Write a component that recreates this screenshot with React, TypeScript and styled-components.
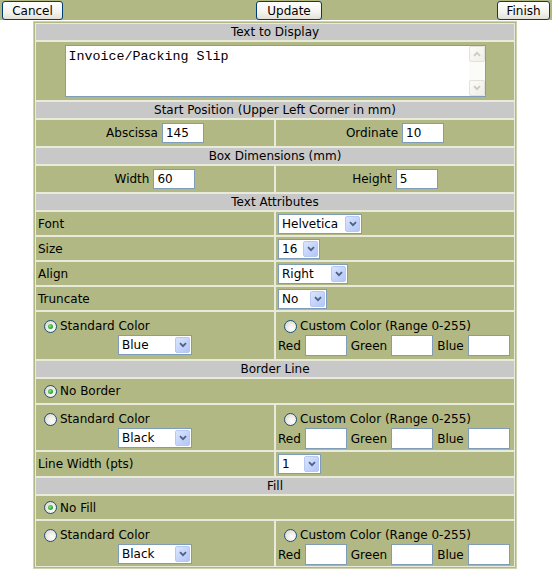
import { createGlobalStyle, styled } from "styled-components";

const OLIVE = "#b1b883";
const LIGHT = "#e9ebda";
const FIELD_BORDER = "#7f9db9";

const GlobalStyle = createGlobalStyle`
  html, body {
    margin: 0;
    padding: 0;
    background: #ffffff;
  }
  body {
    font-family: "DejaVu Sans", Verdana, sans-serif;
    font-size: 12px;
    color: #000000;
  }
`;

// Top toolbar
const TopBar = styled.div`
  display: grid;
  grid-template-columns: 254px 1fr auto;
  align-items: start;
  height: 20px;
  padding: 1px 2px 0;
  box-sizing: border-box;
  background: ${OLIVE};
`;

const XpButton = styled.button<{ $w: number }>`
  width: ${(p) => p.$w}px;
  height: 19px;
  padding: 0;
  border: 1px solid #003c74;
  border-radius: 3px;
  background: linear-gradient(#ffffff 0%, #f4f3ee 60%, #e3e0d6 100%);
  font-family: "DejaVu Sans", Verdana, sans-serif;
  font-size: 12px;
  line-height: 16px;
  color: #000000;
  cursor: pointer;
`;

const RightSlot = styled.div`
  display: flex;
  justify-content: flex-end;
`;

// Form panel
const Panel = styled.div`
  display: grid;
  grid-template-columns: 240px 240px;
  width: 484px;
  margin: 1px 0 0 33px;
  padding: 1px;
  box-sizing: border-box;
  background: ${OLIVE};
  border: 1px solid #cfd3b2;
`;

const Header = styled.div`
  grid-column: 1 / -1;
  height: 18px;
  padding-top: 1px;
  box-sizing: border-box;
  border: 1px solid ${LIGHT};
  background: #c8c8c8;
  text-align: center;
  line-height: 15px;
`;

const Cell = styled.div<{ $h: number; $span?: boolean; $center?: boolean }>`
  grid-column: ${(p) => (p.$span ? "1 / -1" : "auto")};
  display: flex;
  align-items: center;
  justify-content: ${(p) => (p.$center ? "center" : "flex-start")};
  height: ${(p) => p.$h}px;
  padding: 0 2px;
  box-sizing: border-box;
  border: 1px solid ${LIGHT};
  white-space: nowrap;
  overflow: hidden;
`;

const ColorCell = styled.div<{ $h: number }>`
  display: flex;
  flex-direction: column;
  gap: 1px;
  height: ${(p) => p.$h}px;
  padding: 6px 2px 0;
  box-sizing: border-box;
  border: 1px solid ${LIGHT};
  white-space: nowrap;
  overflow: hidden;
`;

const RadioLine = styled.div`
  display: flex;
  align-items: center;
  height: 16px;
`;

const FieldLine = styled.div<{ $center?: boolean }>`
  display: flex;
  align-items: center;
  justify-content: ${(p) => (p.$center ? "center" : "flex-start")};
  gap: 4px;
`;

const Label = styled.span`
  margin-right: 4px;
`;

const TextInput = styled.input<{ $h?: number }>`
  width: 42px;
  height: ${(p) => p.$h ?? 20}px;
  box-sizing: border-box;
  border: 1px solid ${FIELD_BORDER};
  padding: 0 3px;
  font-family: "DejaVu Sans", Verdana, sans-serif;
  font-size: 12px;
  background: #ffffff;
  outline: none;
`;

const Radio = styled.input.attrs({ type: "radio" })`
  appearance: none;
  position: relative;
  flex: none;
  width: 13px;
  height: 13px;
  margin: 0 3px 0 6px;
  border: 1px solid #1c5180;
  border-radius: 50%;
  box-sizing: border-box;
  background: radial-gradient(circle at 65% 65%, #ffffff 0%, #f0efe9 40%, #d2cfc3 100%);
  &:checked::after {
    content: "";
    position: absolute;
    left: 3px;
    top: 3px;
    width: 5px;
    height: 5px;
    border-radius: 50%;
    background: radial-gradient(circle at 40% 40%, #8be08b 0%, #21a121 70%);
  }
`;

// XP style drop-down
const SelectBox = styled.span<{ $w: number }>`
  position: relative;
  display: inline-flex;
  width: ${(p) => p.$w}px;
  height: 20px;
  box-sizing: border-box;
  border: 1px solid ${FIELD_BORDER};
  background: #ffffff;
`;

const NativeSelect = styled.select`
  appearance: none;
  width: 100%;
  height: 100%;
  border: none;
  padding: 0 18px 0 3px;
  background: transparent;
  font-family: "DejaVu Sans", Verdana, sans-serif;
  font-size: 12px;
  color: #000000;
  outline: none;
`;

const ArrowButton = styled.span`
  position: absolute;
  top: 1px;
  right: 1px;
  bottom: 1px;
  width: 15px;
  display: flex;
  align-items: center;
  justify-content: center;
  box-sizing: border-box;
  border: 1px solid #b6c8f3;
  border-radius: 2px;
  background: linear-gradient(135deg, #dbe6fe 0%, #c3d3fb 55%, #b2c6f5 100%);
  pointer-events: none;
`;

const Chevron = ({ color = "#4d6185", up }: { color?: string; up?: boolean }) => (
  <svg width="8" height="6" viewBox="0 0 8 6">
    <path
      d={up ? "M1 4.8 L4 1.8 L7 4.8" : "M1 1.2 L4 4.2 L7 1.2"}
      fill="none"
      stroke={color}
      strokeWidth="1.8"
    />
  </svg>
);

function XpSelect({ w, value }: { w: number; value: string }) {
  return (
    <SelectBox $w={w}>
      <NativeSelect defaultValue={value}>
        <option>{value}</option>
      </NativeSelect>
      <ArrowButton>
        <Chevron />
      </ArrowButton>
    </SelectBox>
  );
}

// Textarea with XP disabled scrollbar
const TextBox = styled.div`
  display: flex;
  width: 421px;
  height: 52px;
  box-sizing: border-box;
  border: 1px solid ${FIELD_BORDER};
  background: #ffffff;
`;

const TextArea = styled.textarea`
  flex: 1;
  border: none;
  resize: none;
  padding: 3px 3px;
  font-family: "Liberation Mono", "Courier New", monospace;
  font-size: 13.33px;
  line-height: 15px;
  outline: none;
  overflow: hidden;
`;

const ScrollTrack = styled.div`
  display: flex;
  flex-direction: column;
  justify-content: space-between;
  width: 16px;
  background: #fbfbf8;
`;

const ScrollBtn = styled.div`
  display: flex;
  align-items: center;
  justify-content: center;
  width: 16px;
  height: 16px;
  box-sizing: border-box;
  border: 1px solid #e3e1d9;
  border-radius: 2px;
  background: linear-gradient(135deg, #fbfbf8 0%, #efeee8 100%);
`;

function ColorRow({ h, value, standard }: { h: number; value: string; standard?: boolean }) {
  return (
    <>
      <ColorCell $h={h}>
        <RadioLine>
          <Radio defaultChecked={standard} />
          <span>Standard Color</span>
        </RadioLine>
        <FieldLine $center>
          <XpSelect w={74} value={value} />
        </FieldLine>
      </ColorCell>
      <ColorCell $h={h}>
        <RadioLine>
          <Radio />
          <span>Custom Color (Range 0-255)</span>
        </RadioLine>
        <FieldLine>
          <span>Red</span>
          <TextInput $h={21} />
          <span>Green</span>
          <TextInput $h={21} />
          <span>Blue</span>
          <TextInput $h={21} />
        </FieldLine>
      </ColorCell>
    </>
  );
}

export default function App() {
  return (
    <>
      <GlobalStyle />
      <TopBar>
        <div>
          <XpButton $w={61}>Cancel</XpButton>
        </div>
        <div>
          <XpButton $w={66}>Update</XpButton>
        </div>
        <RightSlot>
          <XpButton $w={53}>Finish</XpButton>
        </RightSlot>
      </TopBar>

      <Panel>
        <Header>Text to Display</Header>
        <Cell $h={60} $span $center>
          <TextBox>
            <TextArea defaultValue="Invoice/Packing Slip" />
            <ScrollTrack>
              <ScrollBtn>
                <Chevron color="#cdcbbf" up />
              </ScrollBtn>
              <ScrollBtn>
                <Chevron color="#cdcbbf" />
              </ScrollBtn>
            </ScrollTrack>
          </TextBox>
        </Cell>

        <Header>Start Position (Upper Left Corner in mm)</Header>
        <Cell $h={28} $center>
          <Label>Abscissa</Label>
          <TextInput defaultValue="145" />
        </Cell>
        <Cell $h={28} $center>
          <Label>Ordinate</Label>
          <TextInput defaultValue="10" />
        </Cell>

        <Header>Box Dimensions (mm)</Header>
        <Cell $h={28} $center>
          <Label>Width</Label>
          <TextInput defaultValue="60" />
        </Cell>
        <Cell $h={28} $center>
          <Label>Height</Label>
          <TextInput defaultValue="5" />
        </Cell>

        <Header>Text Attributes</Header>
        <Cell $h={25}>Font</Cell>
        <Cell $h={25}>
          <XpSelect w={84} value="Helvetica" />
        </Cell>
        <Cell $h={25}>Size</Cell>
        <Cell $h={25}>
          <XpSelect w={42} value="16" />
        </Cell>
        <Cell $h={25}>Align</Cell>
        <Cell $h={25}>
          <XpSelect w={70} value="Right" />
        </Cell>
        <Cell $h={25}>Truncate</Cell>
        <Cell $h={25}>
          <XpSelect w={49} value="No" />
        </Cell>
        <ColorRow h={49} value="Blue" standard />

        <Header>Border Line</Header>
        <Cell $h={26} $span>
          <Radio name="border" defaultChecked />
          <span>No Border</span>
        </Cell>
        <ColorRow h={47} value="Black" />
        <Cell $h={26}>Line Width (pts)</Cell>
        <Cell $h={26}>
          <XpSelect w={43} value="1" />
        </Cell>

        <Header>Fill</Header>
        <Cell $h={25} $span>
          <Radio name="fill" defaultChecked />
          <span>No Fill</span>
        </Cell>
        <ColorRow h={47} value="Black" />
      </Panel>
    </>
  );
}
